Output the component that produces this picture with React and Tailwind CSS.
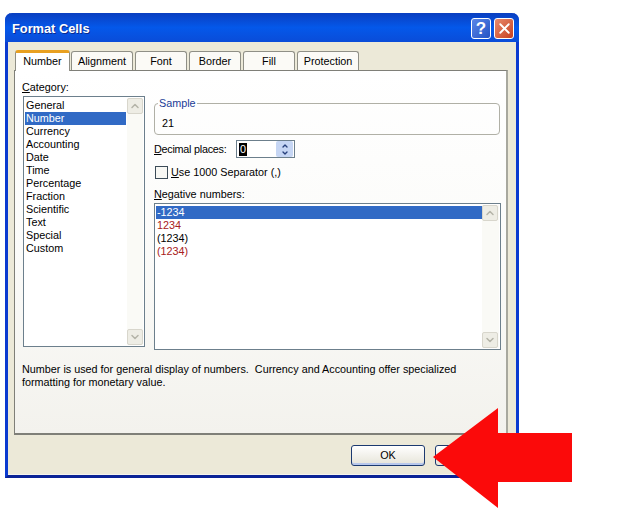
import React from "react";
import { ChevronDown, ChevronUp, X } from "lucide-react";

const categorias = [
  "General",
  "Number",
  "Currency",
  "Accounting",
  "Date",
  "Time",
  "Percentage",
  "Fraction",
  "Scientific",
  "Text",
  "Special",
  "Custom"
];

const negativos = [
  { texto: "-1234", color: "text-white" },
  { texto: "1234", color: "text-[#a82020]" },
  { texto: "(1234)", color: "text-black" },
  { texto: "(1234)", color: "text-[#a82020]" }
];

const tabs = [
  { nombre: "Alignment", ancho: "w-[62px]", margen: "ml-px" },
  { nombre: "Font", ancho: "w-[52px]", margen: "ml-[2px]" },
  { nombre: "Border", ancho: "w-[52px]", margen: "ml-[2px]" },
  { nombre: "Fill", ancho: "w-[52px]", margen: "ml-[2px]" },
  { nombre: "Protection", ancho: "w-[62px]", margen: "ml-[2px]" }
];

function ScrollBtn({ down }) {
  const Icon = down ? ChevronDown : ChevronUp;
  return (
    <div className="flex h-[16px] w-[16px] items-center justify-center rounded-[2px] border border-[#d8d6cc] bg-[#eeede5]">
      <Icon className="h-[12px] w-[12px] text-[#b4b4a8]" strokeWidth={3} />
    </div>
  );
}

function Scrollbar({ className }) {
  return (
    <div className={"flex flex-col justify-between bg-[#fafaf6] " + className}>
      <ScrollBtn />
      <ScrollBtn down />
    </div>
  );
}

export default function App() {
  return (
    <div className="relative h-[524px] w-[624px] overflow-hidden bg-white pl-[5px] pt-[13px] font-['Liberation_Sans',sans-serif] text-[10.8px] leading-[13px] text-black">
      <div className="flex h-[465px] w-[514px] flex-col rounded-t-[7px] border-x-[3px] border-b-[3px] border-x-[#0a3ad0] border-b-[#0a2396] bg-[#ece9d8] shadow-[inset_0_-1px_0_#f5f4ee]">
        <div className="-mx-[3px] flex h-[29px] shrink-0 items-center justify-between rounded-t-[7px] bg-gradient-to-b from-[#0a3fc0] via-[#0458ea] to-[#0a4cd8] pl-[7px] pr-[5px] pt-px">
          <span className="text-[12.8px] font-bold text-white [text-shadow:1px_1px_0_#0a2a90]">Format Cells</span>
          <div className="flex gap-[3px]">
            <div className="flex h-[21px] w-[20px] items-center justify-center rounded-[3px] border border-white bg-gradient-to-br from-[#5a86e8] to-[#2452c4] text-[17px] font-bold text-white">?</div>
            <div className="flex h-[21px] w-[20px] items-center justify-center rounded-[3px] border border-white bg-gradient-to-br from-[#e88a6c] to-[#c63e1e]">
              <X className="h-[17px] w-[17px] text-white" strokeWidth={2.6} />
            </div>
          </div>
        </div>

        <div className="flex h-[28px] shrink-0 items-end pl-[7px]">
          <div className="z-10 -mb-px flex h-[21px] w-[55px] items-center justify-center rounded-t-[3px] border-x border-x-[#8f8f86] border-t-[3px] border-t-[#e8a020] bg-white pb-[2px]">Number</div>
          {tabs.map(function (tab) {
            return (
              <div key={tab.nombre} className={"flex h-[19px] items-center justify-center rounded-t-[3px] border-x border-t border-[#8f8f86] bg-[#fbfaf6] " + tab.ancho + " " + tab.margen}>
                {tab.nombre}
              </div>
            );
          })}
        </div>

        <div className="ml-[6px] h-[365px] w-[494px] shrink-0 border border-b-2 border-r-2 border-[#7f7f78] border-r-[#a8a89e] bg-gradient-to-b from-white via-[#fbfbf9] to-[#f3f2ed] pl-[7px] pt-[10px]">
          <div className="flex items-start">
            <div className="w-[123px] shrink-0">
              <div><u>C</u>ategory:</div>
              <div className="ml-px mt-[2px] flex h-[251px] w-[122px] border border-[#6c7f8c] bg-white p-px">
                <div className="flex-1 pr-px pt-[1px]">
                  {categorias.map(function (cat) {
                    return (
                      <div key={cat} className={"h-[13px] pl-px " + (cat === "Number" ? "bg-[#316ac5] text-white" : "")}>
                        {cat}
                      </div>
                    );
                  })}
                </div>
                <Scrollbar className="w-[16px]" />
              </div>
            </div>

            <div className="ml-[9px] w-[347px] shrink-0 pt-[16px]">
              <fieldset className="mr-px h-[38px] rounded-[4px] border border-[#b0b0a6] pl-[3px]">
                <legend className="h-[13px] px-px text-[#1a3c96]">Sample</legend>
                <div className="pl-[4px] pt-[7px]">21</div>
              </fieldset>

              <div className="mt-[5px] flex h-[18px] items-center">
                <div className="w-[82px] tracking-[-0.25px]"><u>D</u>ecimal places:</div>
                <div className="flex h-[18px] w-[59px] items-center justify-between border border-[#6c7f8c] bg-white pl-[2px] pr-px">
                  <span className="flex h-[13px] w-[8px] items-center justify-center bg-black text-white">0</span>
                  <div className="flex h-[16px] w-[17px] flex-col items-center justify-center rounded-[2px] bg-[#c6d6f4]">
                    <ChevronUp className="-mb-px h-[8px] w-[10px] text-[#27407c]" strokeWidth={4} />
                    <ChevronDown className="h-[8px] w-[10px] text-[#27407c]" strokeWidth={4} />
                  </div>
                </div>
              </div>

              <div className="mt-[8px] flex h-[13px] items-center pl-px">
                <div className="h-[13px] w-[13px] border border-[#3c4c58] bg-[#f8f8f4]" />
                <span className="ml-[3px]"><u>U</u>se 1000 Separator (,)</span>
              </div>

              <div className="mt-[9px]"><u>N</u>egative numbers:</div>
              <div className="mt-[2px] flex h-[147px] border border-[#6c7f8c] bg-white p-px">
                <div className="flex-1 pt-px">
                  {negativos.map(function (neg, i) {
                    return (
                      <div key={i} className={"h-[13px] pl-px " + neg.color + (i === 0 ? " bg-[#316ac5]" : "")}>
                        {neg.texto}
                      </div>
                    );
                  })}
                </div>
                <Scrollbar className="w-[17px]" />
              </div>
            </div>
          </div>

          <p className="mt-[13px] w-[470px]">
            Number is used for general display of numbers.&nbsp; Currency and Accounting offer specialized formatting for monetary value.
          </p>
        </div>

        <div className="mt-[10px] flex justify-end gap-[10px] pr-[7px]">
          <button className="h-[21px] w-[74px] rounded-[3px] border border-[#1c3a70] bg-gradient-to-b from-white to-[#e6e4d8] shadow-[inset_0_-2px_0_#b8c8ec]">OK</button>
          <button className="h-[21px] w-[74px] rounded-[3px] border border-[#1c3a70] bg-gradient-to-b from-white to-[#e6e4d8]">Cancel</button>
        </div>
      </div>

      <svg className="absolute left-0 top-0" width="624" height="524" viewBox="0 0 624 524">
        <polygon points="433,457 498,408 498,433 572,433 572,482 498,482 498,508" fill="#fb0a0a" />
      </svg>
    </div>
  );
}
